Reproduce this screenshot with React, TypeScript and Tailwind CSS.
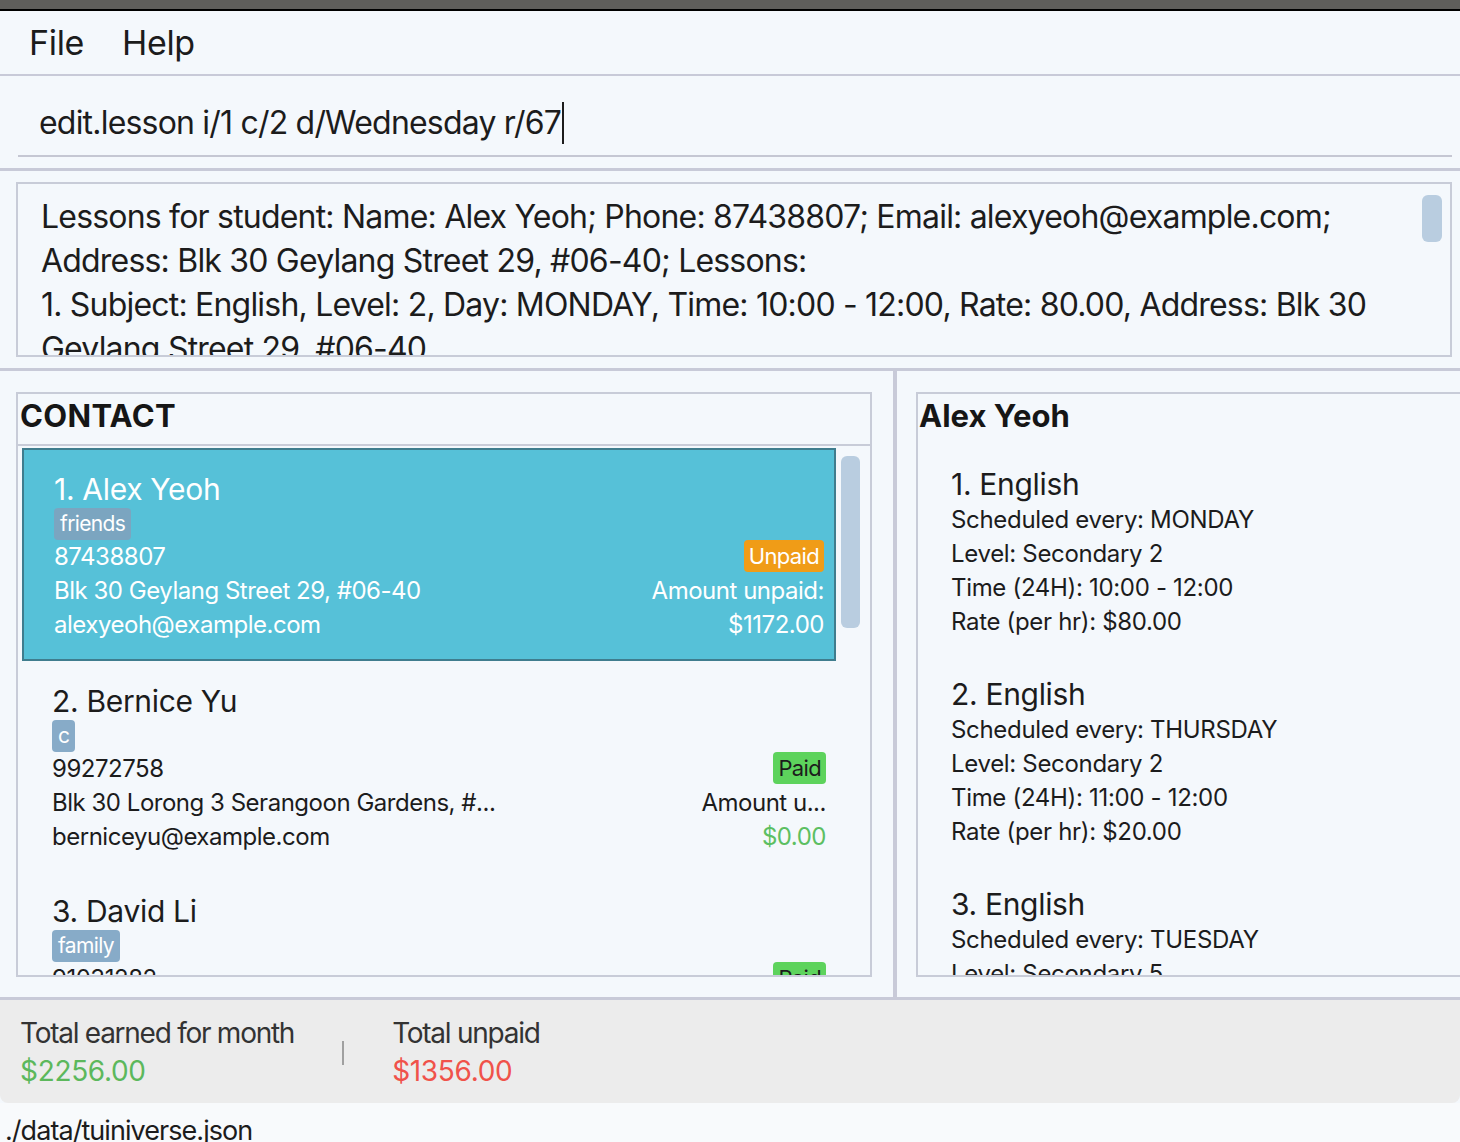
import React from "react";

const lessons = [
  { n: 1, subject: "English", day: "MONDAY", level: "Secondary 2", time: "10:00 - 12:00", rate: "$80.00" },
  { n: 2, subject: "English", day: "THURSDAY", level: "Secondary 2", time: "11:00 - 12:00", rate: "$20.00" },
  { n: 3, subject: "English", day: "TUESDAY", level: "Secondary 5", time: "09:00 - 10:00", rate: "$40.00" },
];

function Tag({ label, selected }: { label: string; selected?: boolean }) {
  return (
    <div className="flex h-[32px] mt-[1px]">
      <span
        className={
          "rounded-[4px] px-[6px] text-[21px] leading-[31px] tracking-[-0.03em] text-white " +
          (selected ? "bg-[#7ba5c0]" : "bg-[#87abc8]")
        }
      >
        {label}
      </span>
    </div>
  );
}

function Badge({ paid }: { paid: boolean }) {
  return paid ? (
    <span className="rounded-[4px] bg-[#5dd35c] px-[5px] text-[22px] leading-[32px] tracking-[-0.03em] text-[#1c1c1c]">Paid</span>
  ) : (
    <span className="rounded-[4px] bg-[#f09c17] px-[5px] text-[22px] leading-[32px] tracking-[-0.03em] text-white">Unpaid</span>
  );
}

function Line({ children, className = "" }: { children: React.ReactNode; className?: string }) {
  return <div className={"text-[24px] leading-[34px] tracking-[-0.02em] whitespace-nowrap " + className}>{children}</div>;
}

export default function App() {
  return (
    <div
      className="w-[1460px] h-[1142px] overflow-hidden bg-[#f4f8fc] flex flex-col text-[#1c1c1c] tracking-[-0.02em]"
      style={{ fontFamily: "Inter, 'Noto Sans', sans-serif" }}
    >
      {/* window title strip */}
      <div className="h-[11px] shrink-0 bg-[#5f5e5b] border-b-2 border-black" />

      {/* menu */}
      <div className="h-[63px] shrink-0 flex items-center gap-[38px] pl-[29px] text-[34px] tracking-[-0.01em]">
        <span>File</span>
        <span>Help</span>
      </div>
      <div className="h-[2px] shrink-0 bg-[#c8cad8]" />

      {/* command box */}
      <div className="h-[92px] shrink-0 pl-[18px] pt-[17px] pr-[8px]">
        <div className="h-[64px] pb-[2px] border-b-2 border-[#c5c7d3] pl-[21px] flex items-center text-[32px] tracking-[-0.025em]">
          <span>edit.lesson i/1 c/2 d/Wednesday r/67</span>
          <span className="ml-[1px] h-[42px] w-[2px] bg-[#1c1c1c]" />
        </div>
      </div>
      <div className="h-[3px] shrink-0 bg-[#c8cad8]" />

      {/* result display */}
      <div className="h-[197px] shrink-0 pt-[11px] pl-[16px] pr-[8px]">
        <div className="relative h-[175px] border-2 border-[#c8ccd8] overflow-hidden pl-[23px] pt-[11px] text-[32px] leading-[44px] tracking-[-0.025em] whitespace-nowrap">
          <div>Lessons for student: Name: Alex Yeoh; Phone: 87438807; Email: alexyeoh@example.com;</div>
          <div>Address: Blk 30 Geylang Street 29, #06-40; Lessons:</div>
          <div>1. Subject: English, Level: 2, Day: MONDAY, Time: 10:00 - 12:00, Rate: 80.00, Address: Blk 30</div>
          <div>Geylang Street 29, #06-40</div>
          <div className="absolute right-[8px] top-[11px] h-[47px] w-[20px] rounded-[6px] bg-[#b9cde0]" />
        </div>
      </div>
      <div className="h-[3px] shrink-0 bg-[#c8cad8]" />

      {/* main panels */}
      <div className="h-[626px] shrink-0 flex">
        {/* contact list */}
        <div className="w-[893px] shrink-0 pt-[21px] pl-[16px] pr-[21px]">
          <div className="h-[585px] border-2 border-[#c8ccd8] flex flex-col">
            <div className="h-[50px] shrink-0 flex items-center pb-[6px] pl-[2px] text-[31px] font-bold tracking-[0.01em] text-[#161616]">
              CONTACT
            </div>
            <div className="h-[2px] shrink-0 bg-[#c8ccd8]" />
            <div className="flex-1 flex overflow-hidden">
              <div className="w-[818px] pl-[4px] pt-[2px] flex flex-col">
                {/* card 1 selected */}
                <div className="h-[213px] shrink-0 bg-[#56c1d8] border-2 border-[#3f7d8e] pl-[30px] pr-[10px] pt-[21px] flex justify-between text-white">
                  <div className="flex flex-col">
                    <div className="text-[30px] leading-[36px]">1. Alex Yeoh</div>
                    <Tag label="friends" selected />
                    <Line>87438807</Line>
                    <Line>Blk 30 Geylang Street 29, #06-40</Line>
                    <Line>alexyeoh@example.com</Line>
                  </div>
                  <div className="flex flex-col items-end pt-[69px]">
                    <div className="h-[34px] flex items-start">
                      <Badge paid={false} />
                    </div>
                    <Line>Amount unpaid:</Line>
                    <Line>$1172.00</Line>
                  </div>
                </div>
                {/* card 2 */}
                <div className="h-[212px] shrink-0 pl-[30px] pr-[10px] pt-[22px] flex justify-between">
                  <div className="flex flex-col">
                    <div className="text-[30px] leading-[36px]">2. Bernice Yu</div>
                    <Tag label="c" />
                    <Line>99272758</Line>
                    <Line>Blk 30 Lorong 3 Serangoon Gardens, #...</Line>
                    <Line>berniceyu@example.com</Line>
                  </div>
                  <div className="flex flex-col items-end pt-[69px]">
                    <div className="h-[34px] flex items-start">
                      <Badge paid />
                    </div>
                    <Line>Amount u...</Line>
                    <Line className="text-[#5cbf62]">$0.00</Line>
                  </div>
                </div>
                {/* card 3 */}
                <div className="h-[212px] shrink-0 pl-[30px] pr-[10px] pt-[20px] flex justify-between">
                  <div className="flex flex-col">
                    <div className="text-[30px] leading-[36px]">3. David Li</div>
                    <Tag label="family" />
                    <Line>91031282</Line>
                    <Line>Blk 11 Ang Mo Kio Street 74, #11-04</Line>
                    <Line>lidavid@example.com</Line>
                  </div>
                  <div className="flex flex-col items-end pt-[69px]">
                    <div className="h-[34px] flex items-start">
                      <Badge paid />
                    </div>
                    <Line>Amount u...</Line>
                    <Line className="text-[#5cbf62]">$0.00</Line>
                  </div>
                </div>
              </div>
              {/* list scrollbar */}
              <div className="flex-1 pt-[10px] pl-[5px]">
                <div className="h-[172px] w-[19px] rounded-[6px] bg-[#b9cde0]" />
              </div>
            </div>
          </div>
        </div>

        <div className="w-[4px] shrink-0 bg-[#c8cad8]" />

        {/* lesson details */}
        <div className="flex-1 pt-[21px] pl-[19px]">
          <div className="h-[585px] border-2 border-r-0 border-[#c8ccd8] overflow-hidden">
            <div className="h-[44px] flex items-center pl-[1px] text-[31px] font-bold tracking-normal text-[#161616]">Alex Yeoh</div>
            <div className="pl-[33px] pt-[27px]">
              {lessons.map((l) => (
                <div key={l.n} className="h-[210px]">
                  <div className="text-[30px] leading-[38px]">
                    {l.n}. {l.subject}
                  </div>
                  <div className="text-[24px] leading-[34px]">Scheduled every: {l.day}</div>
                  <div className="text-[24px] leading-[34px]">Level: {l.level}</div>
                  <div className="text-[24px] leading-[34px]">Time (24H): {l.time}</div>
                  <div className="text-[24px] leading-[34px]">Rate (per hr): {l.rate}</div>
                </div>
              ))}
            </div>
          </div>
        </div>
      </div>
      <div className="h-[3px] shrink-0 bg-[#c8cad8]" />

      {/* totals */}
      <div className="h-[103px] shrink-0 bg-[#ececec] rounded-b-[8px] flex items-center pl-[20px] text-[28px] leading-[38px]">
        <div className="flex flex-col">
          <span className="text-[#333333] tracking-[-0.045em]">Total earned for month</span>
          <span className="text-[#5cb85c]">$2256.00</span>
        </div>
        <div className="ml-[48px] mr-[48px] mt-[2px] h-[24px] w-[2px] bg-[#a0a0a0]" />
        <div className="flex flex-col">
          <span className="text-[#333333] tracking-[-0.045em]">Total unpaid</span>
          <span className="text-[#f0524a]">$1356.00</span>
        </div>
      </div>

      {/* status */}
      <div className="flex-1 bg-[#f8fafc] pl-[5px] pt-[9px] text-[27px] leading-[38px] tracking-[-0.035em]">./data/tuiniverse.json</div>
    </div>
  );
}
